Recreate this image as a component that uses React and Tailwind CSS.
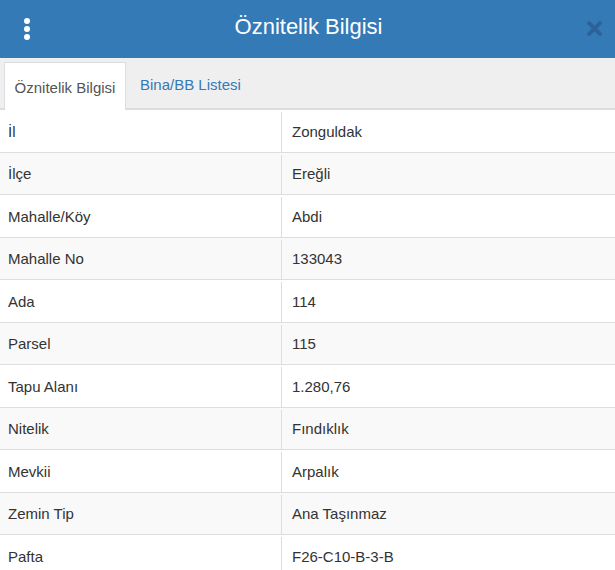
import React from "react";

const rows = [
  ["İl", "Zonguldak"],
  ["İlçe", "Ereğli"],
  ["Mahalle/Köy", "Abdi"],
  ["Mahalle No", "133043"],
  ["Ada", "114"],
  ["Parsel", "115"],
  ["Tapu Alanı", "1.280,76"],
  ["Nitelik", "Fındıklık"],
  ["Mevkii", "Arpalık"],
  ["Zemin Tip", "Ana Taşınmaz"],
  ["Pafta", "F26-C10-B-3-B"],
];

const font = { fontFamily: '"Liberation Sans", Arial, sans-serif' };

export default function App() {
  return (
    <div className="w-[615px] h-[570px] overflow-hidden bg-white text-[#333]" style={font}>
      {/* header */}
      <div className="h-[58px] bg-[#337ab7] flex items-center justify-between px-[24px]">
        <div className="flex flex-col gap-[2px] w-[6px]">
          <span className="w-[6px] h-[6px] rounded-full bg-white" />
          <span className="w-[6px] h-[6px] rounded-full bg-white" />
          <span className="w-[6px] h-[6px] rounded-full bg-white" />
        </div>
        <h1 className="text-[22px] text-white leading-none -mt-[5px]">Öznitelik Bilgisi</h1>
        <svg width="15" height="15" viewBox="0 0 14 14" className="-mr-[11px] -mt-[2px]">
          <path d="M2 2 L12 12 M12 2 L2 12" stroke="#2b6299" strokeWidth="3.6" strokeLinecap="round" />
        </svg>
      </div>

      {/* tabs */}
      <div className="h-[52px] bg-[#efefef] border-b-2 border-[#dddddd] flex items-end pl-[4px]">
        <div className="h-[48px] w-[122px] bg-white border border-b-0 border-[#dddddd] -mb-[2px] pt-[3px] flex items-center justify-center text-[15px] text-[#555]">
          Öznitelik Bilgisi
        </div>
        <div className="h-[48px] flex items-center pt-[3px] px-[14px] text-[15px] text-[#337ab7]">Bina/BB Listesi</div>
      </div>

      {/* attribute table */}
      <div>
        {rows.map(([k, v], i) => (
          <div
            key={k}
            className={`flex h-[42.5px] border-b border-[#dddddd] text-[15px] pt-[2px] ${i % 2 ? "bg-[#f9f9f9]" : "bg-white"}`}
          >
            <div className="w-[282px] border-r border-[#dddddd] pl-[8px] flex items-center">{k}</div>
            <div className="flex-1 pl-[10px] flex items-center">{v}</div>
          </div>
        ))}
      </div>
    </div>
  );
}
